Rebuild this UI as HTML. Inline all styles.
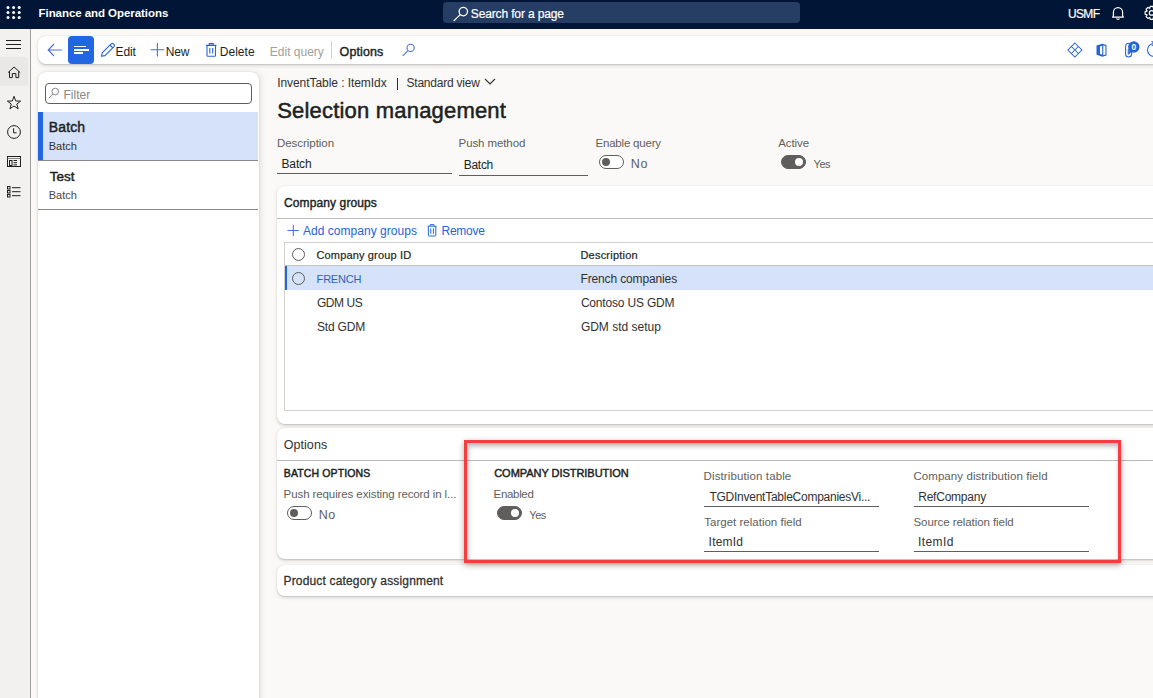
<!DOCTYPE html>
<html><head><meta charset="utf-8">
<style>
*{box-sizing:border-box;margin:0;padding:0}
html,body{width:1153px;height:698px;overflow:hidden;background:#faf9f8;font-family:"Liberation Sans",sans-serif;color:#201f1e}
.t{position:absolute;white-space:nowrap}
.b{position:absolute}
svg{position:absolute;overflow:visible}
.tg{position:absolute;width:25px;height:14px;border-radius:7px;border:1px solid #605e5c;background:#fff}
.tg i{position:absolute;left:2px;top:2px;width:8px;height:8px;border-radius:50%;background:#605e5c}
.tg.on{background:#5f5e5c;border-color:#5f5e5c}
.tg.on i{left:13px;top:2px;background:#fff}
.ul{position:absolute;height:1px;background:#605e5c}
.rad{position:absolute;width:13px;height:13px;border-radius:50%;border:1px solid #605e5c}
</style></head><body>
<!-- top bar -->
<div class="b" style="left:0;top:0;width:1153px;height:29px;background:#011536"></div>
<svg style="left:0;top:0" width="30" height="28">
 <g fill="#fff">
  <circle cx="8" cy="7.6" r="1.5"/><circle cx="13.6" cy="7.6" r="1.5"/><circle cx="19.2" cy="7.6" r="1.5"/>
  <circle cx="8" cy="12.5" r="1.5"/><circle cx="13.6" cy="12.5" r="1.5"/><circle cx="19.2" cy="12.5" r="1.5"/>
  <circle cx="8" cy="17.4" r="1.5"/><circle cx="13.6" cy="17.4" r="1.5"/><circle cx="19.2" cy="17.4" r="1.5"/>
 </g>
</svg>
<div class="b" style="left:443px;top:2px;width:357px;height:21px;background:#263e64;border-radius:4px"></div>
<svg style="left:450px;top:4px" width="20" height="20">
 <circle cx="13.3" cy="7.6" r="4.2" fill="none" stroke="#fff" stroke-width="1.3"/>
 <line x1="10.3" y1="10.6" x2="4" y2="16.6" stroke="#fff" stroke-width="1.3" stroke-linecap="round"/>
</svg>
<svg style="left:1108px;top:4px" width="20" height="20">
 <path d="M4.6 13.2 L5.4 11.8 V8.2 A4.6 4.6 0 0 1 14.6 8.2 V11.8 L15.4 13.2 Z" fill="none" stroke="#fff" stroke-width="1.2" stroke-linejoin="round"/>
 <path d="M8.6 14.4 A1.5 1.5 0 0 0 11.4 14.4" fill="none" stroke="#fff" stroke-width="1.2"/>
</svg>
<svg style="left:1140px;top:3px" width="22" height="22">
 <path d="M16.28 8.14 L18.07 8.59 L18.07 11.21 L16.28 11.66 L16.15 11.96 L17.10 13.55 L15.25 15.40 L13.66 14.45 L13.36 14.58 L12.91 16.37 L10.29 16.37 L9.84 14.58 L9.54 14.45 L7.95 15.40 L6.10 13.55 L7.05 11.96 L6.92 11.66 L5.13 11.21 L5.13 8.59 L6.92 8.14 L7.05 7.84 L6.10 6.25 L7.95 4.40 L9.54 5.35 L9.84 5.22 L10.29 3.43 L12.91 3.43 L13.36 5.22 L13.66 5.35 L15.25 4.40 L17.10 6.25 L16.15 7.84 Z" fill="none" stroke="#fff" stroke-width="1.2" stroke-linejoin="round"/>
 <circle cx="11.60" cy="9.90" r="2.3" fill="none" stroke="#fff" stroke-width="1.2"/>
</svg>

<!-- left nav -->
<div class="b" style="left:0;top:29px;width:30px;height:670px;background:#f2f1f0"></div>
<div class="b" style="left:30px;top:29px;width:1px;height:670px;background:#a19f9d"></div>
<div class="b" style="left:0;top:57px;width:28px;height:29px;background:#e9e8e7;border-radius:0 4px 4px 0"></div>
<svg style="left:0;top:30px" width="30" height="180">
 <g stroke="#201f1e" stroke-width="1" fill="none">
  <line x1="6" y1="10.5" x2="21" y2="10.5"/><line x1="6" y1="14.5" x2="21" y2="14.5"/><line x1="6" y1="18.5" x2="21" y2="18.5"/>
  <path d="M8 42.6 L14.1 37 L20.2 42.6 M9.5 41.4 V47.6 H12.3 V43.6 H15.9 V47.6 H18.7 V41.4" stroke-linejoin="round"/>
  <path d="M14 66.3 L15.8 71 L20.6 71.1 L16.8 74.1 L18.2 78.8 L14 76 L9.9 78.8 L11.3 74.1 L7.4 71.1 L12.3 71 Z" stroke-linejoin="round"/>
  <circle cx="14" cy="102" r="6.4"/>
  <path d="M13.6 98.2 V102.8 H16.6"/>
  <rect x="7.5" y="126.5" width="13" height="10"/>
  <line x1="7.5" y1="128.5" x2="20.5" y2="128.5" stroke="#8a8886"/>
  <rect x="9.5" y="130.5" width="2.5" height="5"/>
  <line x1="13.5" y1="130.5" x2="17" y2="130.5"/><line x1="13.5" y1="132.7" x2="17" y2="132.7"/><line x1="13.5" y1="134.9" x2="17" y2="134.9"/>
  <rect x="7.5" y="156.5" width="2.5" height="2.5"/><rect x="7.5" y="160.5" width="2.5" height="2.5"/><rect x="7.5" y="164.5" width="2.5" height="2.5"/>
  <line x1="12" y1="157.7" x2="20.5" y2="157.7"/><line x1="12" y1="161.7" x2="20.5" y2="161.7"/><line x1="12" y1="165.7" x2="20.5" y2="165.7"/>
 </g>
</svg>

<!-- toolbar -->
<div class="b" style="left:38px;top:36px;width:1130px;height:28px;background:#fff;border-radius:8px 0 0 8px;box-shadow:0 1.6px 3.6px rgba(0,0,0,.13),0 0.3px 0.9px rgba(0,0,0,.11)"></div>
<svg style="left:40px;top:36px" width="30" height="28">
 <path d="M14 8 L8.2 14 L14 20 M8.4 14 H21.8" fill="none" stroke="#4a6de5" stroke-width="1.1"/>
</svg>
<div class="b" style="left:68px;top:36px;width:26px;height:28px;background:#2266e3;border-radius:4px"></div>
<div class="b" style="left:74px;top:45.5px;width:12px;height:1.5px;background:#fff"></div>
<div class="b" style="left:74px;top:49px;width:14.5px;height:1.5px;background:#fff"></div>
<div class="b" style="left:74px;top:52.2px;width:9px;height:1.5px;background:#fff"></div>
<svg style="left:96px;top:36px" width="22" height="28">
 <path d="M5.5 20.3 L6.2 16.8 L15.2 7.8 Q16.3 6.8 17.4 7.8 L18 8.4 Q19 9.5 18 10.6 L9 19.6 Z M14 9 L16.8 11.8" fill="none" stroke="#2564d8" stroke-width="1.1" stroke-linejoin="round"/>
</svg>
<svg style="left:146px;top:36px" width="22" height="28">
 <path d="M11.4 7 V20.6 M4.6 13.8 H18.2" stroke="#4a6de5" stroke-width="1.1"/>
</svg>
<svg style="left:200px;top:36px" width="22" height="28">
 <path d="M6 9.4 H16.5 M9.3 9.2 V7.6 H13.2 V9.2 M7 9.6 V19.4 Q7 20.3 7.9 20.3 H14.6 Q15.5 20.3 15.5 19.4 V9.6 M9.8 12 V17.6 M12.7 12 V17.6" fill="none" stroke="#2564d8" stroke-width="1.1"/>
</svg>
<div class="b" style="left:331px;top:41px;width:1px;height:18px;background:#d2d0ce"></div>
<svg style="left:398px;top:36px" width="22" height="28">
 <circle cx="12.6" cy="11.9" r="3.6" fill="none" stroke="#4a6de5" stroke-width="1.1"/>
 <line x1="10" y1="14.6" x2="4.8" y2="19.8" stroke="#4a6de5" stroke-width="1.1"/>
</svg>
<svg style="left:1064px;top:36px" width="90" height="28">
 <g fill="none" stroke="#2564d8" stroke-width="1.05">
  <path d="M10.9 7 L17.9 14 L10.9 21 L3.9 14 Z M7.4 10.5 L14.4 17.5 M14.4 10.5 L7.4 17.5"/>
  <path d="M32.5 9.5 L38.5 7.8 L42.5 9 V19.5 L38.5 20.8 L32.5 18.8 Z" fill="#2564d8" stroke="none"/>
  <path d="M36 10.5 L38.2 9.8 V18.6 L36 17.9 Z" fill="#fff" stroke="none"/>
  <path d="M39.3 9.3 L41.4 9.9 V18.6 L39.3 19.3 Z" fill="#fff" stroke="none"/>
  <path d="M61.6 10.4 Q61.6 7.3 64.6 7.3 Q67.6 7.3 67.6 10.4 V17.9 Q67.6 20.9 64.6 20.9 Q61.6 20.9 61.6 17.9 Z M64.3 13 V18.6"/>
  <path d="M90 7.5 A6.5 6.5 0 1 0 96.5 14"/>
  <path d="M87.6 5.2 L90.3 7.5 L87.8 10"/>
 </g>
 <circle cx="69.8" cy="11" r="5.7" fill="#2564d8"/><path d="M65.5 13 L64.6 19 L68 15 Z" fill="#2564d8"/>
 <text x="69.8" y="13.7" font-size="8.5" font-family="Liberation Sans" font-weight="bold" fill="#fff" text-anchor="middle">0</text>
</svg>

<!-- list panel -->
<div class="b" style="left:38px;top:72px;width:221px;height:640px;background:#fff;border-radius:8px 8px 0 0;box-shadow:0 1.6px 3.6px rgba(0,0,0,.13),0 0.3px 0.9px rgba(0,0,0,.11),2px 0 7px rgba(0,0,0,.07)"></div>
<div class="b" style="left:45px;top:83px;width:207px;height:21px;border:1px solid #605e5c;border-radius:4px;background:#fff"></div>
<svg style="left:45px;top:83px" width="20" height="21">
 <circle cx="10.3" cy="8.5" r="3.3" fill="none" stroke="#8a8886" stroke-width="1"/>
 <line x1="7.9" y1="11" x2="3.6" y2="15.3" stroke="#8a8886" stroke-width="1"/>
</svg>
<div class="b" style="left:38px;top:112px;width:220px;height:48px;background:#d5e2f9"></div>
<div class="b" style="left:38px;top:112px;width:5px;height:48px;background:#2266e3"></div>
<div class="b" style="left:38px;top:160px;width:220px;height:1px;background:#8a8886"></div>
<div class="b" style="left:38px;top:209px;width:220px;height:1px;background:#8a8886"></div>

<!-- header fields -->
<div class="b" style="left:396.5px;top:78px;width:1.2px;height:11.5px;background:#323130"></div>
<svg style="left:484px;top:76px" width="14" height="12">
 <path d="M1 3 L6 8 L11 3" fill="none" stroke="#323130" stroke-width="1.1"/>
</svg>
<div class="ul" style="left:277px;top:173px;width:175px"></div>
<div class="ul" style="left:459px;top:175px;width:129px"></div>
<div class="tg" style="left:599px;top:155px"><i></i></div>
<div class="tg on" style="left:781px;top:155px"><i></i></div>

<!-- company groups card -->
<div class="b" style="left:277px;top:186px;width:900px;height:238px;background:#fff;border-radius:8px 0 0 8px;box-shadow:0 1.6px 3.6px rgba(0,0,0,.13),0 0.3px 0.9px rgba(0,0,0,.11)"></div>
<div class="b" style="left:277px;top:218px;width:876px;height:1px;background:#bdbbb9"></div>
<svg style="left:284px;top:222px" width="20" height="17">
 <path d="M9.3 2.8 V14 M3.4 8.4 H14.8" stroke="#4a6de5" stroke-width="1.05"/>
</svg>
<svg style="left:424px;top:222px" width="17" height="17">
 <path d="M3.6 4.2 H12.6 M6.3 4 V2.6 H9.9 V4 M4.4 4.4 V13.2 Q4.4 14 5.2 14 H11 Q11.8 14 11.8 13.2 V4.4 M6.8 6.4 V11.8 M9.4 6.4 V11.8" fill="none" stroke="#2564d8" stroke-width="1"/>
</svg>
<div class="b" style="left:284px;top:242px;width:880px;height:169px;border:1px solid #d2d0ce;border-right:none"></div>
<div class="b" style="left:285px;top:265px;width:868px;height:1px;background:#c8c6c4"></div>
<div class="b" style="left:285px;top:266px;width:868px;height:24px;background:#d5e2f9"></div>
<div class="b" style="left:285px;top:266px;width:2px;height:24px;background:#2266e3"></div>
<div class="rad" style="left:292px;top:247.5px"></div>
<div class="rad" style="left:292px;top:271.5px"></div>

<!-- options card -->
<div class="b" style="left:277px;top:428px;width:900px;height:131px;background:#fff;border-radius:8px 0 0 8px;box-shadow:0 1.6px 3.6px rgba(0,0,0,.13),0 0.3px 0.9px rgba(0,0,0,.11)"></div>
<div class="b" style="left:277px;top:460px;width:876px;height:1px;background:#bdbbb9"></div>
<div class="tg" style="left:287px;top:506px"><i></i></div>
<div class="tg on" style="left:497px;top:506px"><i></i></div>
<div class="ul" style="left:704px;top:506px;width:175px"></div>
<div class="ul" style="left:914px;top:506px;width:175px"></div>
<div class="ul" style="left:704px;top:551px;width:175px"></div>
<div class="ul" style="left:914px;top:551px;width:175px"></div>

<!-- product card -->
<div class="b" style="left:277px;top:565px;width:900px;height:31px;background:#fff;border-radius:8px 0 0 8px;box-shadow:0 1.6px 3.6px rgba(0,0,0,.13),0 0.3px 0.9px rgba(0,0,0,.11)"></div>

<!-- red highlight box -->
<div class="b" style="left:464px;top:440px;width:657px;height:123px;border:3px solid #f73c40;box-shadow:0 2px 6px rgba(0,0,0,.35),inset 1px 3px 5px rgba(0,0,0,.3)"></div>

<div class="t" id="fo" style="left:38.55px;top:8.46px;font-size:11.5px;line-height:11.5px;font-weight:bold;color:#fff;letter-spacing:-0.060px">Finance and Operations</div>
<div class="t" id="search" style="left:470.80px;top:7.64px;font-size:12px;line-height:12px;font-weight:normal;color:#fff;letter-spacing:-0.142px;-webkit-text-stroke:0.2px #fff">Search for a page</div>
<div class="t" id="usmf" style="left:1068.02px;top:7.74px;font-size:12px;line-height:12px;font-weight:normal;color:#fff;letter-spacing:-0.675px;-webkit-text-stroke:0.2px #fff">USMF</div>
<div class="t" id="edit" style="left:115.60px;top:45.64px;font-size:12px;line-height:12px;font-weight:normal;color:#201f1e;letter-spacing:-0.175px">Edit</div>
<div class="t" id="new" style="left:165.70px;top:45.64px;font-size:12px;line-height:12px;font-weight:normal;color:#201f1e;letter-spacing:-0.112px">New</div>
<div class="t" id="delete" style="left:219.70px;top:45.64px;font-size:12px;line-height:12px;font-weight:normal;color:#201f1e;letter-spacing:0.055px">Delete</div>
<div class="t" id="editq" style="left:269.80px;top:45.64px;font-size:12px;line-height:12px;font-weight:normal;color:#a19f9d;letter-spacing:0.000px">Edit query</div>
<div class="t" id="options_tb" style="left:339.57px;top:46.02px;font-size:12.5px;line-height:12.5px;font-weight:normal;color:#201f1e;letter-spacing:0.100px;-webkit-text-stroke:0.4px #201f1e">Options</div>
<div class="t" id="filter" style="left:63.40px;top:88.54px;font-size:12px;line-height:12px;font-weight:normal;color:#8a8886;letter-spacing:0.045px">Filter</div>
<div class="t" id="batch1" style="left:48.80px;top:120.15px;font-size:14px;line-height:14px;font-weight:normal;color:#201f1e;letter-spacing:0.125px;-webkit-text-stroke:0.45px #201f1e">Batch</div>
<div class="t" id="batch1s" style="left:48.83px;top:141.29px;font-size:11px;line-height:11px;font-weight:normal;color:#323130;letter-spacing:-0.050px">Batch</div>
<div class="t" id="test" style="left:49.68px;top:170.07px;font-size:13.5px;line-height:13.5px;font-weight:normal;color:#201f1e;letter-spacing:0.025px;-webkit-text-stroke:0.45px #201f1e">Test</div>
<div class="t" id="batch2s" style="left:48.83px;top:189.69px;font-size:11px;line-height:11px;font-weight:normal;color:#484644;letter-spacing:-0.050px">Batch</div>
<div class="t" id="invent" style="left:277.18px;top:76.84px;font-size:12px;line-height:12px;font-weight:normal;color:#323130;letter-spacing:-0.060px">InventTable : ItemIdx</div>
<div class="t" id="stdview" style="left:406.50px;top:76.84px;font-size:12px;line-height:12px;font-weight:normal;color:#323130;letter-spacing:-0.219px">Standard view</div>
<div class="t" id="title" style="left:277.25px;top:100.07px;font-size:22px;line-height:22px;font-weight:normal;color:#201f1e;letter-spacing:0.191px;-webkit-text-stroke:0.5px #201f1e">Selection management</div>
<div class="t" id="desc_l" style="left:276.93px;top:138.06px;font-size:11.5px;line-height:11.5px;font-weight:normal;color:#605e5c;letter-spacing:-0.037px">Description</div>
<div class="t" id="desc_v" style="left:281.50px;top:157.64px;font-size:12px;line-height:12px;font-weight:normal;color:#201f1e;letter-spacing:-0.144px">Batch</div>
<div class="t" id="push_l" style="left:458.62px;top:138.06px;font-size:11.5px;line-height:11.5px;font-weight:normal;color:#605e5c;letter-spacing:-0.102px">Push method</div>
<div class="t" id="push_v" style="left:463.70px;top:158.84px;font-size:12px;line-height:12px;font-weight:normal;color:#201f1e;letter-spacing:-0.269px">Batch</div>
<div class="t" id="eq_l" style="left:595.52px;top:138.06px;font-size:11.5px;line-height:11.5px;font-weight:normal;color:#605e5c;letter-spacing:-0.207px">Enable query</div>
<div class="t" id="eq_v" style="left:630.80px;top:158.02px;font-size:12.5px;line-height:12.5px;font-weight:normal;color:#605e5c;letter-spacing:0.600px">No</div>
<div class="t" id="act_l" style="left:778.20px;top:138.16px;font-size:11.5px;line-height:11.5px;font-weight:normal;color:#605e5c;letter-spacing:-0.070px">Active</div>
<div class="t" id="act_v" style="left:813.55px;top:158.69px;font-size:11px;line-height:11px;font-weight:normal;color:#605e5c;letter-spacing:-0.487px">Yes</div>
<div class="t" id="cg" style="left:283.97px;top:196.84px;font-size:12px;line-height:12px;font-weight:normal;color:#201f1e;letter-spacing:0.117px;-webkit-text-stroke:0.4px #201f1e">Company groups</div>
<div class="t" id="add" style="left:302.90px;top:224.74px;font-size:12px;line-height:12px;font-weight:normal;color:#2564d8;letter-spacing:0.041px">Add company groups</div>
<div class="t" id="remove" style="left:441.50px;top:224.74px;font-size:12px;line-height:12px;font-weight:normal;color:#2564d8;letter-spacing:-0.245px">Remove</div>
<div class="t" id="cgid" style="left:316.50px;top:249.89px;font-size:11px;line-height:11px;font-weight:normal;color:#201f1e;letter-spacing:0.150px;-webkit-text-stroke:0.2px #201f1e">Company group ID</div>
<div class="t" id="desc_h" style="left:580.43px;top:249.89px;font-size:11px;line-height:11px;font-weight:normal;color:#201f1e;letter-spacing:0.222px;-webkit-text-stroke:0.2px #201f1e">Description</div>
<div class="t" id="french" style="left:316.62px;top:273.99px;font-size:11px;line-height:11px;font-weight:normal;color:#2b62c4;letter-spacing:-0.200px">FRENCH</div>
<div class="t" id="frenchc" style="left:580.50px;top:272.54px;font-size:12px;line-height:12px;font-weight:normal;color:#323130;letter-spacing:-0.138px">French companies</div>
<div class="t" id="gdmus" style="left:316.88px;top:297.04px;font-size:12px;line-height:12px;font-weight:normal;color:#323130;letter-spacing:-0.415px">GDM US</div>
<div class="t" id="contoso" style="left:580.88px;top:297.04px;font-size:12px;line-height:12px;font-weight:normal;color:#323130;letter-spacing:-0.183px">Contoso US GDM</div>
<div class="t" id="stdgdm" style="left:317.00px;top:320.84px;font-size:12px;line-height:12px;font-weight:normal;color:#323130;letter-spacing:-0.196px">Std GDM</div>
<div class="t" id="gdmstd" style="left:580.88px;top:320.84px;font-size:12px;line-height:12px;font-weight:normal;color:#323130;letter-spacing:-0.006px">GDM std setup</div>
<div class="t" id="opt" style="left:283.68px;top:438.82px;font-size:12.5px;line-height:12.5px;font-weight:normal;color:#323130;letter-spacing:0.067px">Options</div>
<div class="t" id="batchopt" style="left:283.85px;top:467.91px;font-size:10.5px;line-height:10.5px;font-weight:normal;color:#201f1e;letter-spacing:0.119px;-webkit-text-stroke:0.45px #201f1e">BATCH OPTIONS</div>
<div class="t" id="pushreq" style="left:283.62px;top:488.86px;font-size:11.5px;line-height:11.5px;font-weight:normal;color:#605e5c;letter-spacing:-0.100px">Push requires existing record in l...</div>
<div class="t" id="no2" style="left:318.80px;top:509.42px;font-size:12.5px;line-height:12.5px;font-weight:normal;color:#605e5c;letter-spacing:0.500px">No</div>
<div class="t" id="compdist" style="left:494.23px;top:468.29px;font-size:11px;line-height:11px;font-weight:normal;color:#201f1e;letter-spacing:-0.043px;-webkit-text-stroke:0.45px #201f1e">COMPANY DISTRIBUTION</div>
<div class="t" id="enabled" style="left:493.62px;top:489.26px;font-size:11.5px;line-height:11.5px;font-weight:normal;color:#605e5c;letter-spacing:-0.333px">Enabled</div>
<div class="t" id="yes2" style="left:529.35px;top:510.19px;font-size:11px;line-height:11px;font-weight:normal;color:#605e5c;letter-spacing:-0.488px">Yes</div>
<div class="t" id="disttab" style="left:703.62px;top:470.56px;font-size:11.5px;line-height:11.5px;font-weight:normal;color:#605e5c;letter-spacing:0.115px">Distribution table</div>
<div class="t" id="tgd" style="left:709.45px;top:490.64px;font-size:12px;line-height:12px;font-weight:normal;color:#323130;letter-spacing:-0.256px">TGDInventTableCompaniesVi...</div>
<div class="t" id="cdf" style="left:913.38px;top:470.56px;font-size:11.5px;line-height:11.5px;font-weight:normal;color:#605e5c;letter-spacing:0.077px">Company distribution field</div>
<div class="t" id="refc" style="left:918.20px;top:490.64px;font-size:12px;line-height:12px;font-weight:normal;color:#323130;letter-spacing:-0.222px">RefCompany</div>
<div class="t" id="trf" style="left:704.25px;top:517.26px;font-size:11.5px;line-height:11.5px;font-weight:normal;color:#605e5c;letter-spacing:0.009px">Target relation field</div>
<div class="t" id="itemid1" style="left:708.58px;top:535.74px;font-size:12px;line-height:12px;font-weight:normal;color:#323130;letter-spacing:0.225px">ItemId</div>
<div class="t" id="srf" style="left:913.50px;top:517.26px;font-size:11.5px;line-height:11.5px;font-weight:normal;color:#605e5c;letter-spacing:-0.069px">Source relation field</div>
<div class="t" id="itemid2" style="left:917.88px;top:535.74px;font-size:12px;line-height:12px;font-weight:normal;color:#323130;letter-spacing:0.465px">ItemId</div>
<div class="t" id="pca" style="left:283.54px;top:575.04px;font-size:12px;line-height:12px;font-weight:normal;color:#323130;letter-spacing:0.163px;-webkit-text-stroke:0.28px #323130">Product category assignment</div>
</body></html>
